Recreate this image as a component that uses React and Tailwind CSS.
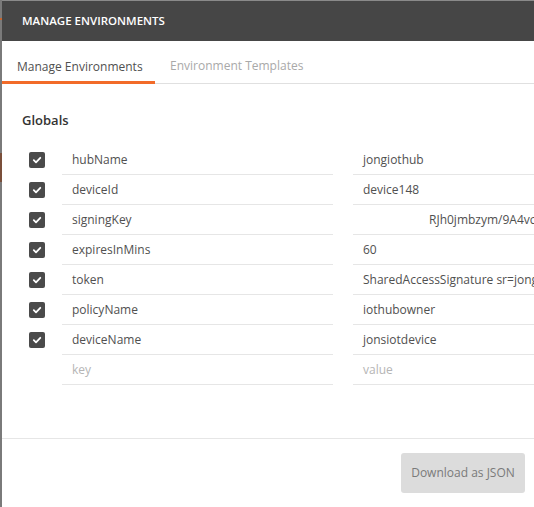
import React from "react";

const rows = [
  ["hubName", "jongiothub"],
  ["deviceId", "device148"],
  ["signingKey", "RJh0jmbzym/9A4vc", true],
  ["expiresInMins", "60"],
  ["token", "SharedAccessSignature sr=jongiothub.azure-devices.net"],
  ["policyName", "iothubowner"],
  ["deviceName", "jonsiotdevice"],
];

function Check() {
  return (
    <div className="w-4 h-4 rounded-[2px] bg-[#4a4a4a] flex items-center justify-center">
      <svg width="10" height="10" viewBox="0 0 10 10">
        <path d="M1.8 5.2 L4 7.3 L8.3 2.8" fill="none" stroke="#fff" strokeWidth="1.8" strokeLinecap="round" strokeLinejoin="round" />
      </svg>
    </div>
  );
}

export default function App() {
  return (
    <div
      className="w-[534px] h-[507px] overflow-hidden flex bg-[#7a7a7a]"
      style={{ fontFamily: '"Open Sans", sans-serif' }}
    >
      <div className="w-[2px] shrink-0 flex flex-col">
        <div className="h-[18px]" />
        <div className="h-[2px] bg-[#c8662e]" />
        <div className="h-[133px]" />
        <div className="h-[29px] bg-[#7a4f3a]" />
      </div>
      <div className="flex-1 min-w-0 flex flex-col pt-[1px] bg-[#8a8a8a]">
        <div className="h-[40px] bg-[#464646] flex items-center pl-5 text-white text-[11.5px] font-semibold shrink-0">
          MANAGE ENVIRONMENTS
        </div>
        <div className="flex-1 min-w-0 bg-white flex flex-col">
          <div className="flex h-[43px] border-b border-[#e0e0e0] text-[12px] shrink-0">
            <div className="w-[153px] pl-[15px] flex items-center pt-[11px] border-b-[3px] border-[#f26b29] -mb-px text-[#505050]">
              Manage Environments
            </div>
            <div className="pl-[15px] flex items-center pt-[8px] text-[#a9a9a9]">
              Environment Templates
            </div>
          </div>
          <div className="pl-5 pt-[27px] text-[13px] font-semibold text-[#333] h-[61px] leading-[18px]">
            Globals
          </div>
          <div className="flex flex-col text-[12px]">
            {rows.map(([k, v, indent]) => (
              <div key={k} className="flex h-[30px] min-w-0">
                <div className="w-[60px] shrink-0 flex items-center pl-[27px]">
                  <Check />
                </div>
                <div className="w-[271px] shrink-0 border-b border-[#e6e6e6] flex items-center pl-[10px] text-[#505050] whitespace-nowrap">
                  {k}
                </div>
                <div className="w-[20px] shrink-0" />
                <div className={`flex-1 min-w-0 border-b border-[#e6e6e6] flex items-center ${indent ? "pl-[76px]" : "pl-[10px]"} text-[#505050] whitespace-nowrap overflow-hidden`}>
                  {v}
                </div>
              </div>
            ))}
            <div className="flex h-[30px] min-w-0">
              <div className="w-[60px] shrink-0" />
              <div className="w-[271px] shrink-0 border-b border-[#e6e6e6] flex items-center pl-[10px] text-[#b5b5b5]">
                key
              </div>
              <div className="w-[20px] shrink-0" />
              <div className="flex-1 min-w-0 border-b border-[#e6e6e6] flex items-center pl-[10px] text-[#b5b5b5]">
                value
              </div>
            </div>
          </div>
          <div className="h-[53px]" />
          <div className="border-t border-[#e6e6e6] flex justify-end pt-[14px] pr-[9px]">
            <div className="w-[124px] h-[40px] rounded-[3px] bg-[#dcdcdc] text-[#7a7a7a] text-[12px] flex items-center justify-center">
              Download as JSON
            </div>
          </div>
        </div>
      </div>
    </div>
  );
}
